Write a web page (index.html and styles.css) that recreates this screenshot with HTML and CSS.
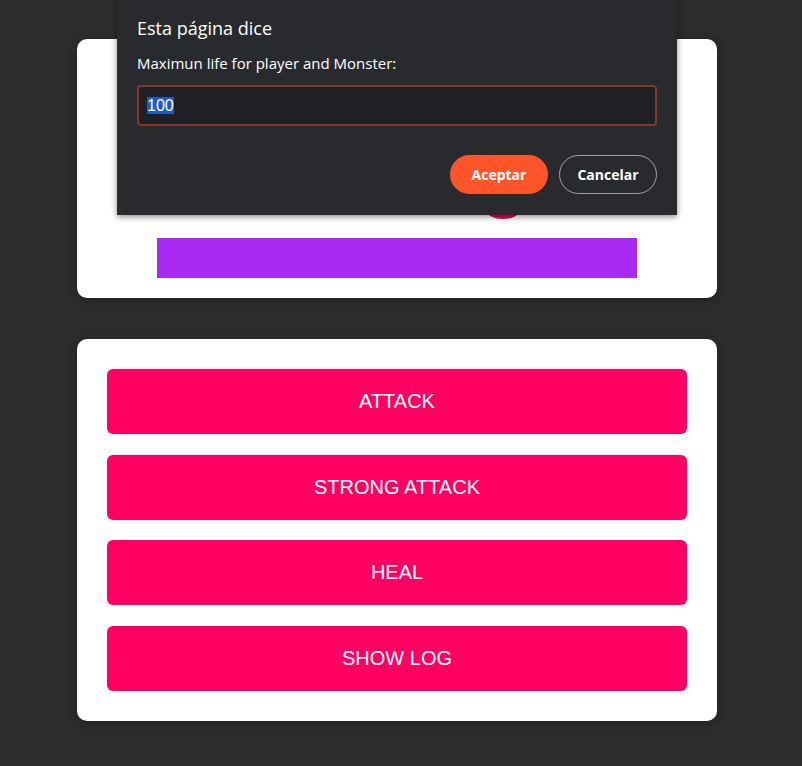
FILE: index.html
```html
<!DOCTYPE html>
<html lang="es">
<head>
<meta charset="utf-8">
<title>Monster Killer</title>
<link rel="stylesheet" href="styles.css">
</head>
<body>
<section class="card health">
  <div class="blob-row"><span class="blob"></span></div>
  <div class="bar player-bar"></div>
</section>
<section class="card controls">
  <button class="action">ATTACK</button>
  <button class="action">STRONG ATTACK</button>
  <button class="action">HEAL</button>
  <button class="action">SHOW LOG</button>
</section>

<div class="dialog">
  <h1 class="dialog-title">Esta página dice</h1>
  <p class="dialog-label">Maximun life for player and Monster:</p>
  <div class="dialog-input"><span class="selected">100</span></div>
  <div class="dialog-actions">
    <button class="btn-primary">Aceptar</button>
    <button class="btn-secondary">Cancelar</button>
  </div>
</div>
</body>
</html>
```

FILE: styles.css
```css
* { box-sizing: border-box; }
html, body { height: 100%; }
body {
  margin: 0;
  background: #2c2c2c;
  font-family: "Liberation Sans", Arial, sans-serif;
  padding-top: 39px;
  overflow: hidden;
}
.card {
  width: 640px;
  margin: 0 auto 0 77px;
  background: #fff;
  border-radius: 10px;
  box-shadow: 0 2px 8px rgba(0,0,0,0.3);
}
.health {
  height: 259px;
  padding: 0 80px 20px;
  display: flex;
  flex-direction: column;
  justify-content: flex-end;
}
.blob-row { height: 19px; }
.blob {
  display: block;
  width: 32px;
  height: 40px;
  border-radius: 0 0 16px 16px / 0 0 8px 8px;
  background: #f0005c;
  margin-left: 330px;
  margin-top: -40px;
}
.bar { height: 40px; width: 480px; }
.player-bar { background: #a928f2; }
.controls {
  margin-top: 41px;
  padding: 30px;
  display: flex;
  flex-direction: column;
  gap: 20.5px;
}
.action {
  height: 65px;
  border: none;
  border-radius: 6px;
  background: #ff0062;
  color: #fff;
  font-family: "Liberation Sans", Arial, sans-serif;
  font-size: 20px;
  padding: 0;
}

.dialog {
  position: absolute;
  left: 117px;
  top: -10px;
  width: 560px;
  height: 225px;
  background: #292a2d;
  box-shadow: 0 2px 6px rgba(0,0,0,0.45);
  padding: 25px 20px 0 20px;
  font-family: "Open Sans", "Noto Sans", sans-serif;
  color: #fff;
}
.dialog-title {
  margin: 0;
  font-size: 18px;
  font-weight: 400;
  line-height: 26px;
}
.dialog-label {
  margin: 12px 0 0;
  font-size: 15px;
  line-height: 21px;
}
.dialog-input {
  margin-top: 11px;
  height: 41px;
  border: 2px solid #83392a;
  border-radius: 4px;
  background: #202124;
  padding: 9px 8px;
  font-family: "Liberation Sans", Arial, sans-serif;
  font-size: 16px;
  line-height: 19px;
  color: #fff;
}
.selected { background: #1c5cc2; }
.dialog-actions {
  margin-top: 29px;
  display: flex;
  justify-content: flex-end;
  gap: 11px;
}
.dialog-actions button {
  width: 98px;
  height: 39px;
  border-radius: 20px;
  font-family: "Open Sans", "Noto Sans", sans-serif;
  font-size: 14px;
  font-weight: 700;
  color: #fff;
  padding: 0;
}
.btn-primary {
  background: #fd5529;
  border: none;
}
.btn-secondary {
  background: transparent;
  border: 1px solid #a0a3a8;
}
```
